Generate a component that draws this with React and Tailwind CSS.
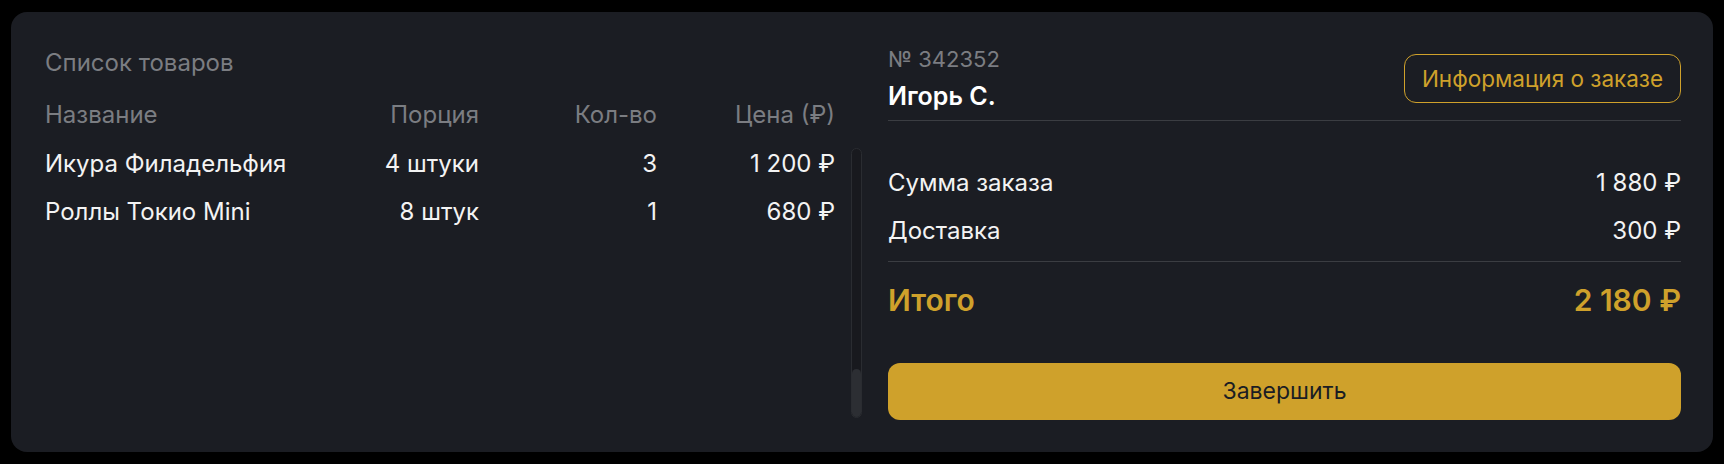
import React from 'react';

const items = [
  { name: 'Икура Филадельфия', portion: '4 штуки', qty: 3, price: '1 200 ₽' },
  { name: 'Роллы Токио Mini', portion: '8 штук', qty: 1, price: '680 ₽' },
];

const cols = 'grid grid-cols-[314px_120px_178px_178px]';

export default function App() {
  return (
    <div className="min-h-screen bg-black pt-[12px] pl-[11px] font-['Inter','Noto_Sans',sans-serif]">
      <div className="flex h-[440px] w-[1702px] rounded-[16px] bg-[#1b1d23] pl-[34px] pr-[32px]">
        <section className="flex w-[817px] flex-col pt-[35px]">
          <h2 className="text-[24px] leading-[32px] text-[#7b7d82]">Список товаров</h2>
          <div className={`${cols} mt-[20px] w-[790px] text-[24px] leading-[32px] text-[#7b7d82]`}>
            <span>Название</span>
            <span className="text-right">Порция</span>
            <span className="text-right">Кол-во</span>
            <span className="text-right">Цена (₽)</span>
          </div>
          <div className="mt-[17px] flex h-[270px] gap-[16px]">
            <div className="flex w-[790px] flex-col gap-4">
              {items.map((item) => (
                <div key={item.name} className={`${cols} text-[24px] leading-[32px] text-[#f3f3f3]`}>
                  <span>{item.name}</span>
                  <span className="text-right">{item.portion}</span>
                  <span className="text-right">{item.qty}</span>
                  <span className="text-right">{item.price}</span>
                </div>
              ))}
            </div>
            <div className="flex w-[11px] flex-col justify-end rounded-full border border-[#2a2c31] bg-[#18191e]">
              <div className="h-[48px] rounded-full bg-[#2c2e33]" />
            </div>
          </div>
        </section>

        <section className="ml-[26px] flex flex-1 flex-col pt-[33px]">
          <div className="flex items-center justify-between border-b border-[#3b3d42] pb-[8px]">
            <div>
              <p className="text-[22px] leading-[28px] text-[#7b7d82]">№ 342352</p>
              <p className="mt-[7px] text-[25px] font-semibold leading-[32px] text-white">Игорь С.</p>
            </div>
            <button
              type="button"
              className="h-[49px] w-[277px] rounded-[12px] border border-[#cfa12b] text-[22.5px] text-[#cfa12b]"
            >
              Информация о заказе
            </button>
          </div>

          <div className="mt-[46px] flex flex-col gap-[16px] border-b border-[#3b3d42] pb-[14px] text-[24px] leading-[32px] text-[#f3f3f3]">
            <div className="flex justify-between">
              <span>Сумма заказа</span>
              <span>1 880 ₽</span>
            </div>
            <div className="flex justify-between">
              <span>Доставка</span>
              <span>300 ₽</span>
            </div>
          </div>

          <div className="mt-[20px] flex justify-between text-[30px] font-semibold leading-[36px] text-[#cfa12b]">
            <span>Итого</span>
            <span>2 180 ₽</span>
          </div>

          <button
            type="button"
            className="mt-[45px] h-[57px] w-full rounded-[12px] bg-[#cfa12b] text-[23px] text-[#1b1d23]"
          >
            Завершить
          </button>
        </section>
      </div>
    </div>
  );
}
